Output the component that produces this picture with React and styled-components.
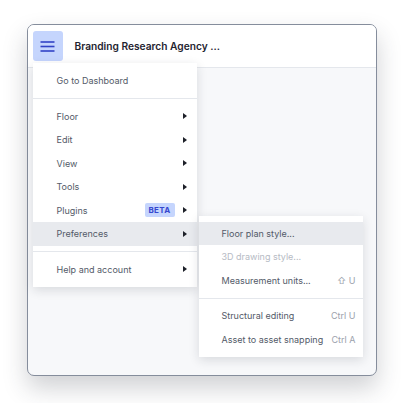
import React from 'react';
import styled, { createGlobalStyle } from 'styled-components';

const Global = createGlobalStyle`
    body {
        margin: 0;
        background: #ffffff;
        font-family: Inter, "Noto Sans", sans-serif;
    }
`;

const Page = styled.div`
    width: 407px;
    height: 403px;
    padding: 24px 0 0 27px;
    box-sizing: border-box;
`;

const Window = styled.div`
    position: relative;
    width: 350px;
    height: 352px;
    box-sizing: border-box;
    border: 1.5px solid #858d9c;
    border-radius: 7px;
    background: #f7f8fa;
    box-shadow: 0 12px 24px rgba(40, 45, 60, 0.22);
    display: flex;
    flex-direction: column;
`;

const Header = styled.div`
    height: 42px;
    flex-shrink: 0;
    display: flex;
    align-items: center;
    gap: 12px;
    padding-left: 4.5px;
    background: #ffffff;
    border-bottom: 1px solid #e4e7ec;
    border-radius: 6px 6px 0 0;
`;

const MenuButton = styled.button`
    width: 30px;
    height: 30px;
    border: none;
    border-radius: 3px;
    background: #c5d5fd;
    display: flex;
    align-items: center;
    justify-content: center;
    padding: 0;
`;

const Title = styled.div`
    font-size: 10.2px;
    font-weight: 600;
    color: #1f2430;
`;

const Menu = styled.div`
    position: absolute;
    left: ${p => p.left}px;
    top: ${p => p.top}px;
    width: 164px;
    padding: 6px 0;
    background: #ffffff;
    box-shadow: 0 3px 10px rgba(30, 35, 50, 0.14);
    z-index: ${p => p.z || 1};
`;

const Item = styled.div`
    height: 23.5px;
    display: flex;
    align-items: center;
    padding: 0 ${p => p.pr || 10}px 0 ${p => p.pl || 24}px;
    font-size: 9px;
    color: ${p => (p.disabled ? '#b6bbc4' : '#535a68')};
    background: ${p => (p.active ? '#e8eaee' : 'transparent')};
`;

const Label = styled.span`
    flex: 1;
`;

const Arrow = styled.span`
    width: 0;
    height: 0;
    border-top: 3px solid transparent;
    border-bottom: 3px solid transparent;
    border-left: 4px solid #1d2029;
    margin-left: 8px;
`;

const Badge = styled.span`
    font-size: 8px;
    font-weight: 700;
    color: #3648cf;
    background: #c5d5fd;
    border-radius: 2px;
    padding: 2px 4px;
    letter-spacing: 0.3px;
`;

const Shortcut = styled.span`
    color: #9ba1ac;
    font-size: 9px;
`;

const Separator = styled.div`
    height: 1px;
    margin: 5.5px 0;
    background: #e4e7ec;
`;

const Hamburger = () => (
    <svg width="15" height="11" viewBox="0 0 15 11">
        <g stroke="#3142c6" strokeWidth="1.6">
            <line x1="0.5" y1="1" x2="14.5" y2="1" />
            <line x1="0.5" y1="5.5" x2="14.5" y2="5.5" />
            <line x1="0.5" y1="10" x2="14.5" y2="10" />
        </g>
    </svg>
);

const App = () => {
    return (
        <Page>
            <Global />
            <Window>
                <Header>
                    <MenuButton>
                        <Hamburger />
                    </MenuButton>
                    <Title>Branding Research Agency ...</Title>
                </Header>
                <Menu left={4.5} top={38}>
                    <Item>Go to Dashboard</Item>
                    <Separator />
                    <Item><Label>Floor</Label><Arrow /></Item>
                    <Item><Label>Edit</Label><Arrow /></Item>
                    <Item><Label>View</Label><Arrow /></Item>
                    <Item><Label>Tools</Label><Arrow /></Item>
                    <Item><Label>Plugins</Label><Badge>BETA</Badge><Arrow /></Item>
                    <Item active><Label>Preferences</Label><Arrow /></Item>
                    <Separator />
                    <Item><Label>Help and account</Label><Arrow /></Item>
                </Menu>
                <Menu left={170.5} top={190.5} z={2}>
                    <Item active pl={23} pr={7}><Label>Floor plan style...</Label></Item>
                    <Item disabled pl={23} pr={7}><Label>3D drawing style...</Label></Item>
                    <Item pl={23} pr={7}><Label>Measurement units...</Label><Shortcut>⇧ U</Shortcut></Item>
                    <Separator />
                    <Item pl={23} pr={7}><Label>Structural editing</Label><Shortcut>Ctrl U</Shortcut></Item>
                    <Item pl={23} pr={7}><Label>Asset to asset snapping</Label><Shortcut>Ctrl A</Shortcut></Item>
                </Menu>
            </Window>
        </Page>
    );
};

export default App;
